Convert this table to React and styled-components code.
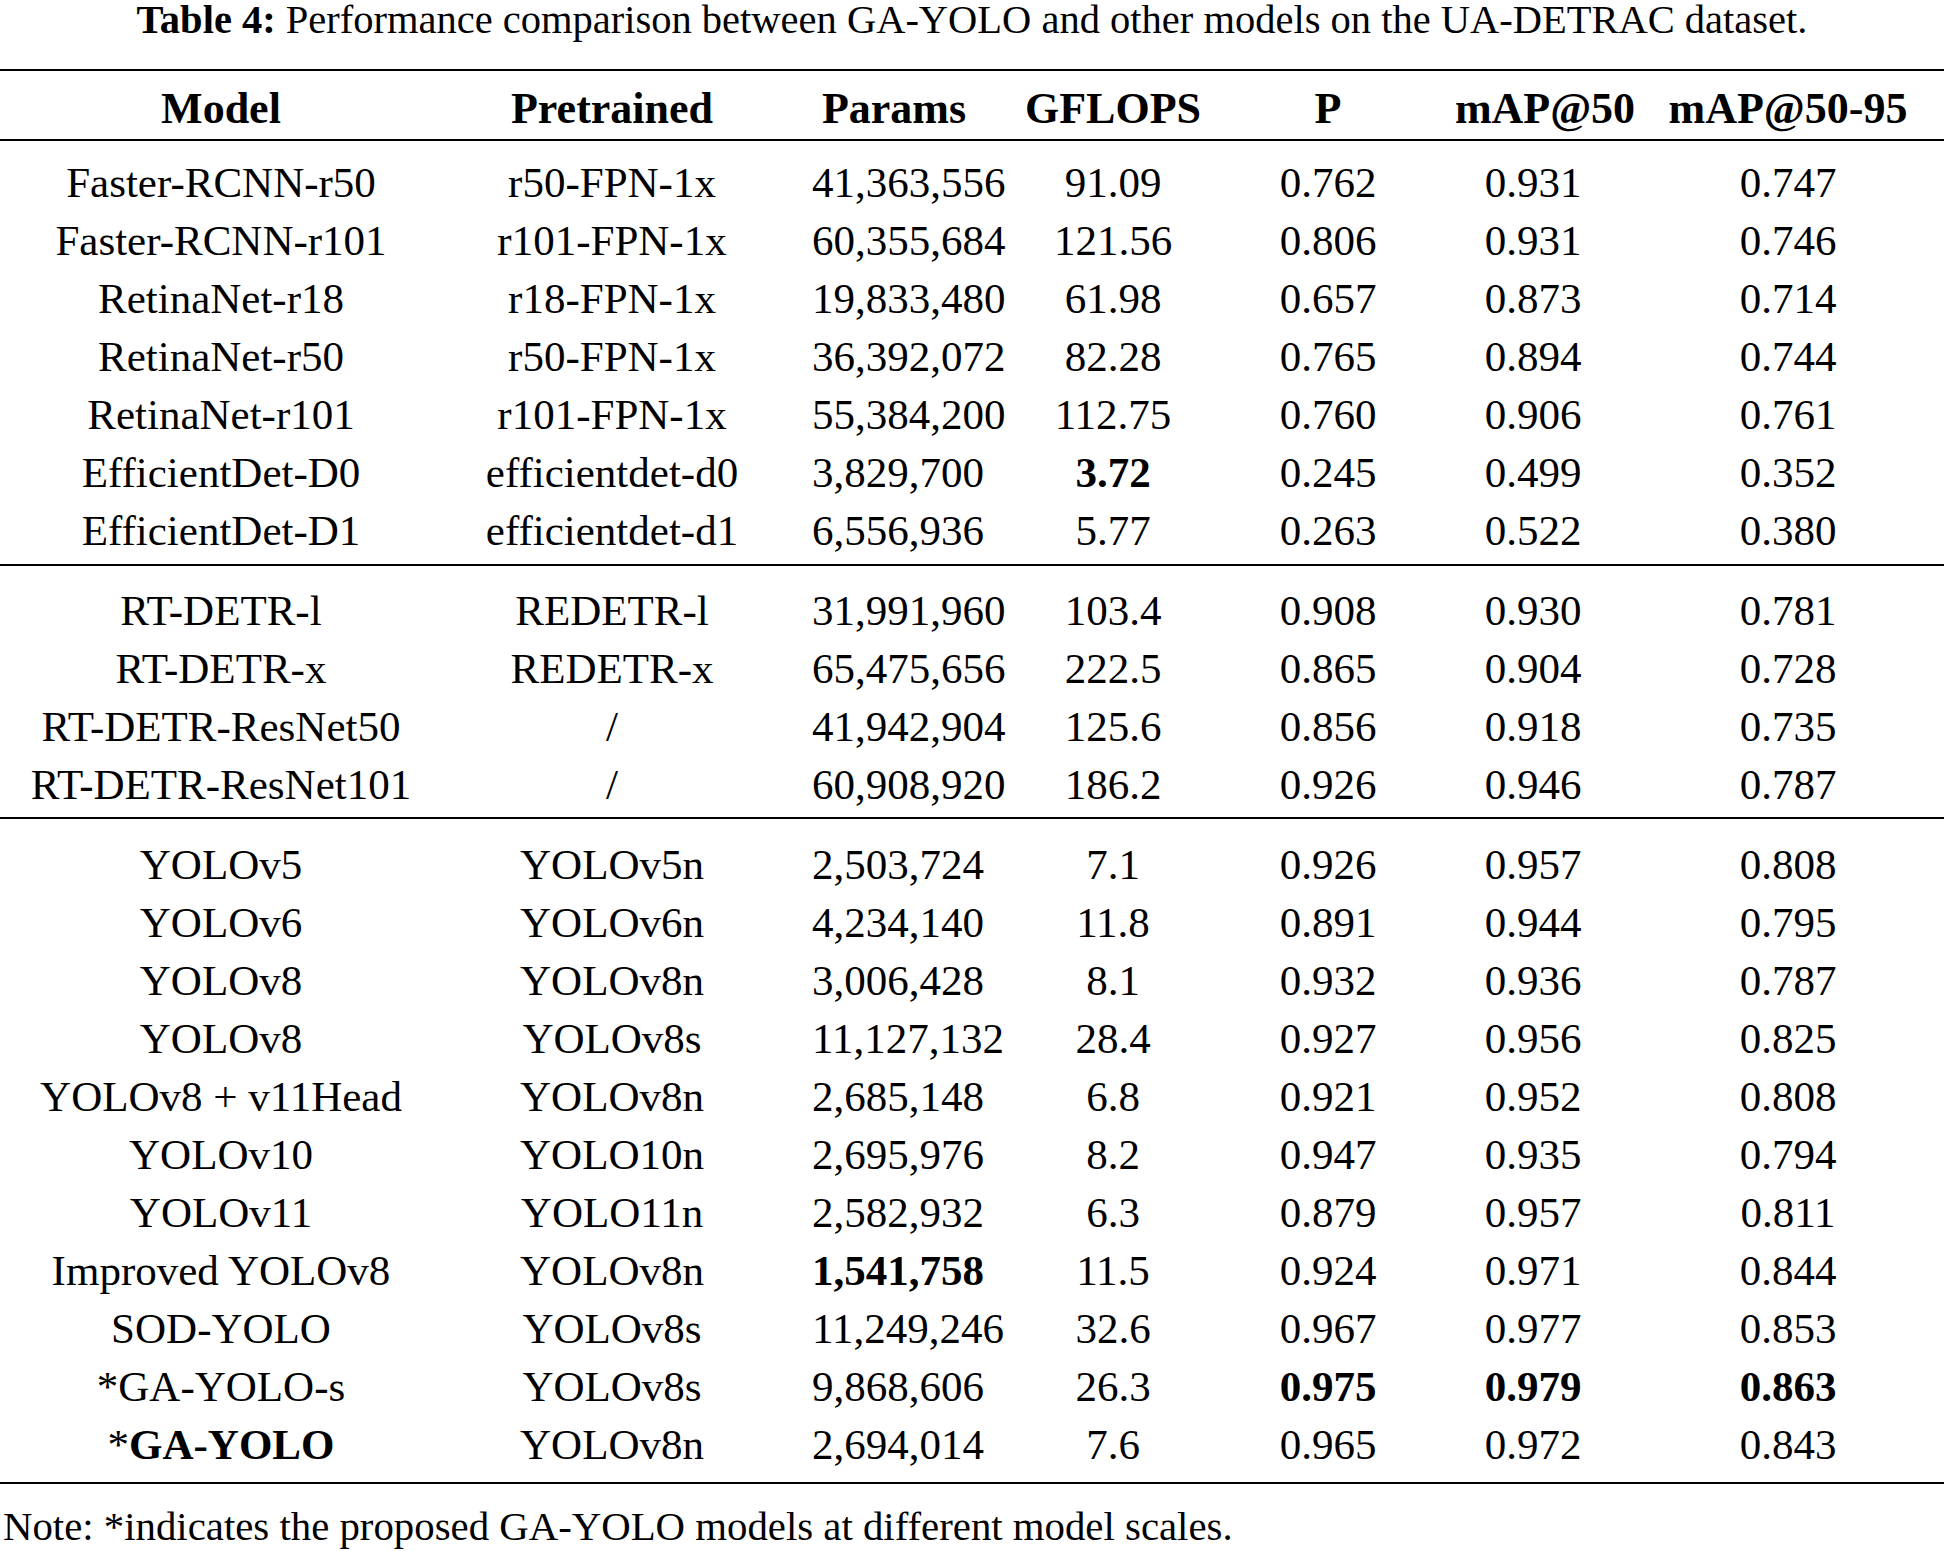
import React from 'react';
import styled, { createGlobalStyle } from 'styled-components';

const SERIF = '"Liberation Serif", "Times New Roman", Times, serif';

const GlobalStyle = createGlobalStyle`
  html, body {
    margin: 0;
    padding: 0;
    background: #ffffff;
  }
  body {
    font-family: ${SERIF};
    color: #000000;
  }
`;

const COLUMNS = '442px 340px 224px 214px 216px 218px 268px';

const Page = styled.div`
  width: 1944px;
  min-height: 1551px;
  display: flex;
  flex-direction: column;
  font-family: ${SERIF};
  color: #000;
`;

const Caption = styled.p`
  margin: 0 0 31px;
  display: flex;
  justify-content: center;
  gap: 10px;
  height: 38px;
  align-items: center;
  white-space: nowrap;
`;

const CaptionLabel = styled.span`
  font-family: ${SERIF};
  font-size: 40.5px;
  font-weight: 700;
`;

const CaptionText = styled.span`
  font-family: ${SERIF};
  font-size: 40.5px;
  font-weight: 400;
`;

const Table = styled.div`
  border-top: 2px solid #000;
  border-bottom: 2px solid #000;
  display: flex;
  flex-direction: column;
  font-family: ${SERIF};
`;

const HeaderRow = styled.div`
  display: grid;
  grid-template-columns: ${COLUMNS};
  padding-top: 7px;
  line-height: 61px;
  font-size: 44px;
  border-bottom: 2px solid #000;
`;

const Group = styled.div`
  padding-top: ${({ $top }) => $top}px;
  padding-bottom: ${({ $bottom }) => $bottom}px;
  border-bottom: ${({ $last }) => ($last ? 'none' : '2px solid #000')};
`;

const Row = styled.div`
  display: grid;
  grid-template-columns: ${COLUMNS};
  height: 58px;
  line-height: 58px;
  font-size: 43px;
`;

const Cell = styled.div`
  white-space: nowrap;
  text-align: ${({ $align }) => $align || 'center'};
  padding-left: ${({ $pl }) => $pl || 0}px;
  padding-right: ${({ $pr }) => $pr || 0}px;
  font-weight: ${({ $bold }) => ($bold ? 700 : 400)};

  b {
    font-weight: 700;
  }
`;

const Note = styled.div`
  margin-top: 23px;
  padding-left: 3px;
  font-family: ${SERIF};
  font-size: 40.8px;
  line-height: 40px;
  white-space: nowrap;
`;

const HEADERS = ['Model', 'Pretrained', 'Params', 'GFLOPS', 'P', 'mAP@50', 'mAP@50-95'];

// last entry of a row (optional): indexes of the cells set in bold
const GROUPS = [
  {
    top: 13,
    bottom: 4,
    rows: [
      ['Faster-RCNN-r50', 'r50-FPN-1x', '41,363,556', '91.09', '0.762', '0.931', '0.747'],
      ['Faster-RCNN-r101', 'r101-FPN-1x', '60,355,684', '121.56', '0.806', '0.931', '0.746'],
      ['RetinaNet-r18', 'r18-FPN-1x', '19,833,480', '61.98', '0.657', '0.873', '0.714'],
      ['RetinaNet-r50', 'r50-FPN-1x', '36,392,072', '82.28', '0.765', '0.894', '0.744'],
      ['RetinaNet-r101', 'r101-FPN-1x', '55,384,200', '112.75', '0.760', '0.906', '0.761'],
      ['EfficientDet-D0', 'efficientdet-d0', '3,829,700', '3.72', '0.245', '0.499', '0.352', [3]],
      ['EfficientDet-D1', 'efficientdet-d1', '6,556,936', '5.77', '0.263', '0.522', '0.380'],
    ],
  },
  {
    top: 16,
    bottom: 3,
    rows: [
      ['RT-DETR-l', 'REDETR-l', '31,991,960', '103.4', '0.908', '0.930', '0.781'],
      ['RT-DETR-x', 'REDETR-x', '65,475,656', '222.5', '0.865', '0.904', '0.728'],
      ['RT-DETR-ResNet50', '/', '41,942,904', '125.6', '0.856', '0.918', '0.735'],
      ['RT-DETR-ResNet101', '/', '60,908,920', '186.2', '0.926', '0.946', '0.787'],
    ],
  },
  {
    top: 17,
    bottom: 8,
    rows: [
      ['YOLOv5', 'YOLOv5n', '2,503,724', '7.1', '0.926', '0.957', '0.808'],
      ['YOLOv6', 'YOLOv6n', '4,234,140', '11.8', '0.891', '0.944', '0.795'],
      ['YOLOv8', 'YOLOv8n', '3,006,428', '8.1', '0.932', '0.936', '0.787'],
      ['YOLOv8', 'YOLOv8s', '11,127,132', '28.4', '0.927', '0.956', '0.825'],
      ['YOLOv8 + v11Head', 'YOLOv8n', '2,685,148', '6.8', '0.921', '0.952', '0.808'],
      ['YOLOv10', 'YOLO10n', '2,695,976', '8.2', '0.947', '0.935', '0.794'],
      ['YOLOv11', 'YOLO11n', '2,582,932', '6.3', '0.879', '0.957', '0.811'],
      ['Improved YOLOv8', 'YOLOv8n', '1,541,758', '11.5', '0.924', '0.971', '0.844', [2]],
      ['SOD-YOLO', 'YOLOv8s', '11,249,246', '32.6', '0.967', '0.977', '0.853'],
      ['*GA-YOLO-s', 'YOLOv8s', '9,868,606', '26.3', '0.975', '0.979', '0.863', [4, 5, 6]],
      [
        <>
          *<b>GA-YOLO</b>
        </>,
        'YOLOv8n',
        '2,694,014',
        '7.6',
        '0.965',
        '0.972',
        '0.843',
      ],
    ],
  },
];

const cellProps = (i) => {
  if (i === 2) return { $align: 'left', $pl: 30 };
  if (i === 5) return { $pr: 24 };
  return {};
};

const App = () => {
  return (
    <Page>
      <GlobalStyle />
      <Caption>
        <CaptionLabel>Table 4:</CaptionLabel>
        <CaptionText>Performance comparison between GA-YOLO and other models on the UA-DETRAC dataset.</CaptionText>
      </Caption>

      <Table>
        <HeaderRow>
          {HEADERS.map((h) => (
            <Cell key={h} $bold>
              {h}
            </Cell>
          ))}
        </HeaderRow>

        {GROUPS.map((group, gi) => (
          <Group key={gi} $top={group.top} $bottom={group.bottom} $last={gi === GROUPS.length - 1}>
            {group.rows.map((row, ri) => {
              const bold = row[7] || [];
              return (
                <Row key={ri}>
                  {row.slice(0, 7).map((value, ci) => (
                    <Cell key={ci} $bold={bold.includes(ci)} {...cellProps(ci)}>
                      {value}
                    </Cell>
                  ))}
                </Row>
              );
            })}
          </Group>
        ))}
      </Table>

      <Note>Note: *indicates the proposed GA-YOLO models at different model scales.</Note>
    </Page>
  );
};

export default App;
